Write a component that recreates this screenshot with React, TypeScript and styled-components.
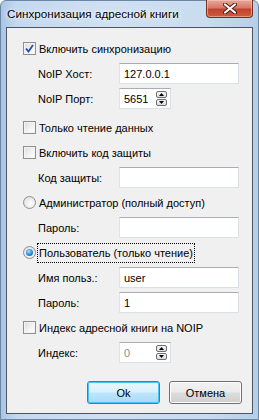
import React from 'react';
import styled, { createGlobalStyle, css } from 'styled-components';

const Global = createGlobalStyle`
  html, body { margin: 0; padding: 0; }
  body {
    width: 259px;
    height: 420px;
    overflow: hidden;
    font-family: "Liberation Sans", Arial, sans-serif;
  }
`;

const Frame = styled.div`
  width: 259px;
  height: 420px;
  box-sizing: border-box;
  display: flex;
  flex-direction: column;
  background: linear-gradient(90deg, #a9c6e6 0%, #c3d8ef 6%, #cfe0f2 40%, #c9dcf0 80%, #b6cee8 100%);
  border: 1px solid #6c87a6;
  border-radius: 6px 6px 0 0;
`;

const TitleBar = styled.div`
  height: 26px;
  display: flex;
  justify-content: space-between;
  align-items: flex-start;
  padding-left: 6px;
`;

const Caption = styled.div`
  font-family: "Liberation Sans", Arial, sans-serif;
  font-size: 11.7px;
  color: #000;
  margin-top: 6px;
  text-shadow: 0 0 6px rgba(255, 255, 255, 0.9), 0 0 3px #fff;
`;

const CloseBtn = styled.div`
  width: 47px;
  height: 18px;
  margin-right: 5px;
  margin-top: -1px;
  box-sizing: border-box;
  border: 1px solid #762d22;
  border-top: none;
  border-radius: 0 0 4px 4px;
  background: linear-gradient(180deg, #e9a99a 0%, #d7786a 45%, #c2432f 55%, #cf5a3e 100%);
  box-shadow: inset 0 0 0 1px rgba(255, 210, 200, 0.5);
  display: flex;
  align-items: center;
  justify-content: center;
`;

const Client = styled.div`
  flex: 1;
  margin: 0 5px 5px 5px;
  border: 1px solid #4c5561;
  background: #f0f0f0;
  padding: 8px 10px 0 16px;
  display: flex;
  flex-direction: column;
  font-size: 11px;
  color: #000;
`;

const Row = styled.div<{ $indent?: boolean; $gapTop?: number }>`
  height: 25px;
  display: flex;
  align-items: center;
  ${p => p.$indent && css`padding-left: 15px;`}
  ${p => p.$gapTop && css`margin-top: ${p.$gapTop}px;`}
`;

const Box = styled.span`
  width: 13px;
  height: 13px;
  box-sizing: border-box;
  border: 1px solid #8e8f8f;
  background: linear-gradient(135deg, #dcdcdc 0%, #f4f4f4 60%, #fff 100%);
  box-shadow: inset 0 0 0 1px #f4f4f4;
  display: inline-flex;
  align-items: center;
  justify-content: center;
  margin-right: 2px;
  flex: none;
`;

const Radio = styled.span<{ $on?: boolean }>`
  width: 13px;
  height: 13px;
  box-sizing: border-box;
  border-radius: 50%;
  border: 1px solid #8e8f8f;
  background: radial-gradient(circle at 60% 60%, #fff 0%, #e4e4e4 70%, #d0d0d0 100%);
  display: inline-flex;
  align-items: center;
  justify-content: center;
  margin-right: 2px;
  flex: none;
  &::after {
    content: '';
    display: ${p => (p.$on ? 'block' : 'none')};
    width: 7px;
    height: 7px;
    border-radius: 50%;
    background: radial-gradient(circle at 40% 35%, #9ee2ff 0%, #2a8ad4 55%, #0b4f9a 100%);
  }
`;

const Text = styled.span<{ $focus?: boolean }>`
  padding: 3px 1px;
  white-space: nowrap;
  ${p => p.$focus && css`
    outline: 1px dotted #000;
    outline-offset: 0;
  `}
`;

const Label = styled.span`
  width: 81px;
  flex: none;
  white-space: nowrap;
`;

const Field = styled.div<{ $narrow?: boolean; $disabled?: boolean }>`
  width: ${p => (p.$narrow ? 52 : 120)}px;
  height: 21px;
  box-sizing: border-box;
  border: 1px solid #dbdfe6;
  border-top-color: #abadb3;
  border-left-color: #e2e3ea;
  background: #fff;
  display: flex;
  align-items: center;
  padding-left: 4px;
  color: ${p => (p.$disabled ? '#8d8d8d' : '#000')};
  position: relative;
`;

const Spin = styled.div`
  position: absolute;
  right: 3px;
  top: 2px;
  width: 11px;
  height: 15px;
  display: flex;
  flex-direction: column;
  gap: 1px;
`;

const SpinPart = styled.div`
  flex: 1;
  box-sizing: border-box;
  border: 1px solid #707070;
  border-radius: 2px;
  background: linear-gradient(180deg, #f6f6f6, #dcdcdc);
  display: flex;
  align-items: center;
  justify-content: center;
`;

const Buttons = styled.div`
  display: flex;
  justify-content: flex-end;
  gap: 9px;
  margin-top: 16px;
`;

const Btn = styled.div<{ $default?: boolean }>`
  width: 73px;
  height: 23px;
  box-sizing: border-box;
  border: 1px solid #707070;
  border-radius: 3px;
  background: linear-gradient(180deg, #f2f2f2 0%, #ebebeb 48%, #dddddd 52%, #cfcfcf 100%);
  box-shadow: inset 0 0 0 1px #fcfcfc;
  display: flex;
  align-items: center;
  justify-content: center;
  ${p => p.$default && css`
    border-color: #3c7fb1;
    background: linear-gradient(180deg, #eaf6fd 0%, #d9f0fc 48%, #bee6fd 52%, #a7d9f5 100%);
    box-shadow: inset 0 0 0 1px #48c6f8;
  `}
`;

function Check({ on }: { on?: boolean }) {
  return (
    <Box>
      {on && (
        <svg width="9" height="9" viewBox="0 0 9 9">
          <path d="M1 4.5 L3.5 7.5 L8 1" fill="none" stroke="#1f4fa6" strokeWidth="1.8" />
        </svg>
      )}
    </Box>
  );
}

function Arrow({ up }: { up?: boolean }) {
  return (
    <svg width="5" height="3" viewBox="0 0 5 3">
      <path d={up ? 'M0 3 L2.5 0 L5 3 Z' : 'M0 0 L2.5 3 L5 0 Z'} fill="#000" />
    </svg>
  );
}

function Spinner({ value, disabled }: { value: string; disabled?: boolean }) {
  return (
    <Field $narrow $disabled={disabled}>
      {value}
      <Spin>
        <SpinPart><Arrow up /></SpinPart>
        <SpinPart><Arrow /></SpinPart>
      </Spin>
    </Field>
  );
}

function FieldRow({ label, children }: { label: string; children: React.ReactNode }) {
  return (
    <Row $indent>
      <Label>{label}</Label>
      {children}
    </Row>
  );
}

export default function App() {
  return (
    <>
      <Global />
      <Frame>
        <TitleBar>
          <Caption>Синхронизация адресной книги</Caption>
          <CloseBtn>
            <svg width="14" height="11" viewBox="0 0 14 11">
              <path d="M2 1.5 L12 9.5 M12 1.5 L2 9.5" stroke="#4a1c14" strokeWidth="4" strokeLinecap="round" />
              <path d="M2 1.5 L12 9.5 M12 1.5 L2 9.5" stroke="#fff" strokeWidth="2.2" strokeLinecap="round" />
            </svg>
          </CloseBtn>
        </TitleBar>
        <Client>
          <Row>
            <Check on />
            <Text>Включить синхронизацию</Text>
          </Row>
          <FieldRow label="NoIP Хост:">
            <Field>127.0.0.1</Field>
          </FieldRow>
          <FieldRow label="NoIP Порт:">
            <Spinner value="5651" />
          </FieldRow>
          <Row $gapTop={4}>
            <Check />
            <Text>Только чтение данных</Text>
          </Row>
          <Row>
            <Check />
            <Text>Включить код защиты</Text>
          </Row>
          <FieldRow label="Код защиты:">
            <Field />
          </FieldRow>
          <Row>
            <Radio />
            <Text>Администратор (полный доступ)</Text>
          </Row>
          <FieldRow label="Пароль:">
            <Field />
          </FieldRow>
          <Row>
            <Radio $on />
            <Text $focus>Пользователь (только чтение)</Text>
          </Row>
          <FieldRow label="Имя польз.:">
            <Field>user</Field>
          </FieldRow>
          <FieldRow label="Пароль:">
            <Field>1</Field>
          </FieldRow>
          <Row>
            <Check />
            <Text>Индекс адресной книги на NOIP</Text>
          </Row>
          <FieldRow label="Индекс:">
            <Spinner value="0" disabled />
          </FieldRow>
          <Buttons>
            <Btn $default>Ok</Btn>
            <Btn>Отмена</Btn>
          </Buttons>
        </Client>
      </Frame>
    </>
  );
}
